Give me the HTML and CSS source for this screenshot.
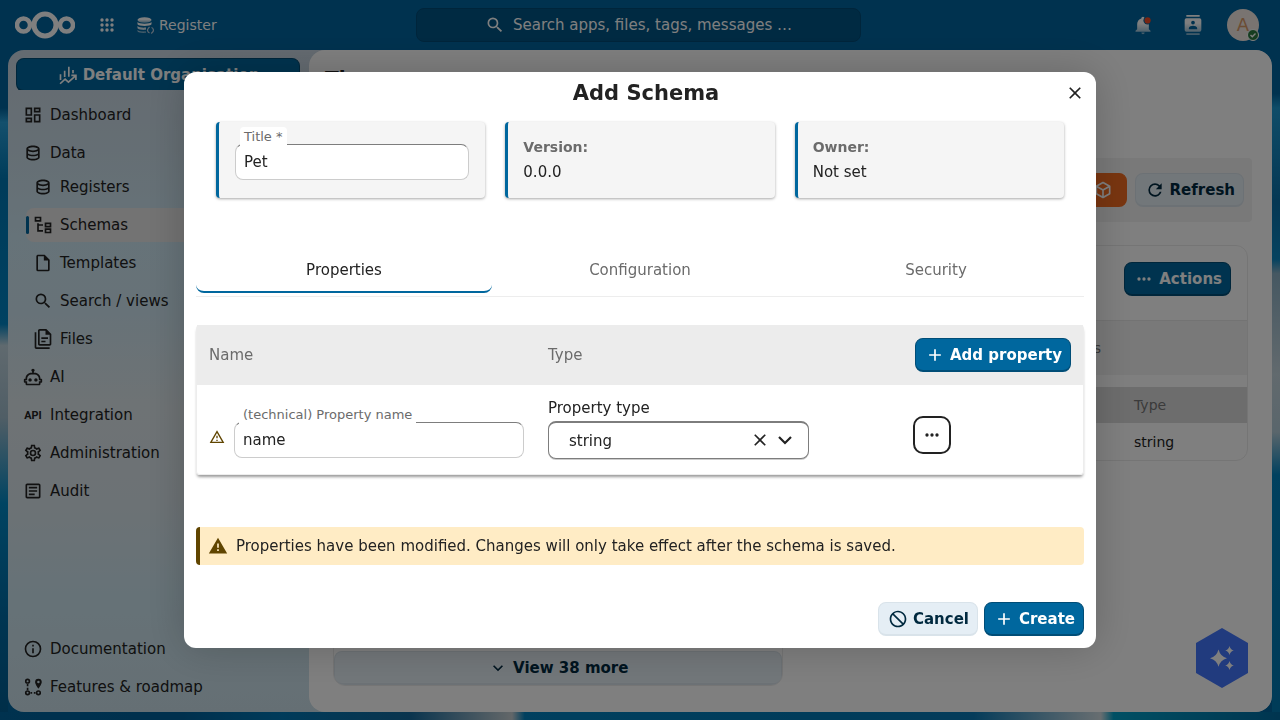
FILE: index.html
```html
<!DOCTYPE html>
<html lang="en">
  <head>
    <meta charset="UTF-8" />
    <title>Schemas - Register</title>
    <link rel="stylesheet" href="styles.css">
  </head>

  <body>
    <header class="topbar">
      <div class="topbar-left">
        <a href="#" class="logo" aria-label="Home">
          <svg width="60" height="28" viewBox="0 0 60 28" fill="none" stroke="#fff">
            <circle cx="30" cy="14" r="11" stroke-width="5" />
            <circle cx="8.500" cy="14" r="6.500" stroke-width="4.500" />
            <circle cx="51.500" cy="14" r="6.500" stroke-width="4.500" />
          </svg>
        </a>
        <a href="#" class="apps" aria-label="All apps">
          <svg width="14" height="14" viewBox="0 0 14 14" fill="#fff">
            <circle cx="2" cy="2" r="1.700" /><circle cx="7" cy="2" r="1.700" /><circle cx="12" cy="2" r="1.700" />
            <circle cx="2" cy="7" r="1.700" /><circle cx="7" cy="7" r="1.700" /><circle cx="12" cy="7" r="1.700" />
            <circle cx="2" cy="12" r="1.700" /><circle cx="7" cy="12" r="1.700" /><circle cx="12" cy="12" r="1.700" />
          </svg>
        </a>
        <a href="#" class="current-app">
          <svg width="17" height="17" viewBox="0 0 17 17">
            <defs>
              <linearGradient id="fade" x1="0" y1="0" x2="0" y2="1">
                <stop offset="0" stop-color="#fff" />
                <stop offset="0.4" stop-color="#fff" />
                <stop offset="1" stop-color="#fff" stop-opacity="0.500" />
              </linearGradient>
            </defs>
            <g fill="url(#fade)">
              <ellipse cx="7.500" cy="3" rx="7" ry="2.800" />
              <path d="M.5 5c1 2.300 13 2.300 14 0v2.300c-1 2.300-13 2.300-14 0zM.5 9c1 1.500 5 2 8.500 1.600v2.200c-3.500.3-7.500 0-8.500-1.600zM.5 13c1 1.300 5 1.800 8.500 1.500v1.300c-4 .5-8-.2-8.500-1.500z" />
            </g>
            <path d="M12.500 9.800l-1.200 1.500a2.800 2.800 0 0 0 1.200 4.600M14.300 16.500l1.200-1.300a2.800 2.800 0 0 0-1-4.700" fill="none" stroke="#bcd" stroke-width="1.200" />
          </svg>
          Register
        </a>
      </div>

      <button class="search">
        <svg class="icon" viewBox="0 0 24 24"><path d="M9.500,3A6.500,6.500 0 0,1 16,9.500C16,11.110 15.410,12.590 14.440,13.730L14.710,14H15.500L20.500,19L19,20.500L14,15.500V14.710L13.730,14.440C12.590,15.410 11.110,16 9.500,16A6.500,6.500 0 0,1 3,9.500A6.500,6.500 0 0,1 9.500,3M9.500,5C7,5 5,7 5,9.500C5,12 7,14 9.500,14C12,14 14,12 14,9.500C14,7 12,5 9.500,5Z" /></svg>
        Search apps, files, tags, messages …
      </button>

      <div class="topbar-right">
        <button class="top-icon" aria-label="Notifications">
          <svg class="icon" viewBox="0 0 24 24">
            <path fill="url(#fade)" d="M21,19V20H3V19L5,17V11C5,7.900 7.030,5.170 10,4.290C10,4.190 10,4.100 10,4A2,2 0 0,1 12,2A2,2 0 0,1 14,4C14,4.100 14,4.190 14,4.290C16.970,5.170 19,7.900 19,11V17L21,19M14,21A2,2 0 0,1 12,23A2,2 0 0,1 10,21" />
            <circle cx="17.500" cy="6.500" r="5" fill="#00649e" />
            <circle cx="17.500" cy="6.500" r="3.700" fill="#f04a24" />
          </svg>
        </button>
        <button class="top-icon" aria-label="Contacts">
          <svg class="icon" viewBox="0 0 24 24"><path fill="url(#fade)" d="M20,0H4V2H20V0M4,24H20V22H4V24M20,4H4A2,2 0 0,0 2,6V18A2,2 0 0,0 4,20H20A2,2 0 0,0 22,18V6A2,2 0 0,0 20,4M12,6.750A2.250,2.250 0 0,1 14.250,9A2.250,2.250 0 0,1 12,11.250A2.250,2.250 0 0,1 9.750,9A2.250,2.250 0 0,1 12,6.750M17,17H7V15.500C7,13.830 10.330,13 12,13C13.670,13 17,13.830 17,15.500V17Z" /></svg>
        </button>
        <button class="avatar" aria-label="Settings menu">
          A
          <svg class="status" width="12" height="12" viewBox="0 0 12 12">
            <circle cx="6" cy="6" r="5.500" fill="#2d7b41" stroke="#fff" stroke-width="1" />
            <path d="M3.500 6l1.800 1.800 3.200-3.200" fill="none" stroke="#fff" stroke-width="1.400" />
          </svg>
        </button>
      </div>
    </header>

    <div class="content">
      <nav class="sidebar">
        <div class="org">
          <button class="btn primary wide">
            <svg class="icon" viewBox="0 0 24 24" fill="none" stroke="currentColor" stroke-width="2"><path d="M3 18v-7M8 14.500V7M13 14V2M18 10V6" /><path d="M2.500 22.500l6-5.500 4 3.500 8.500-7.500M16 12.500h5.500V18" /></svg>
            Default Organisation
          </button>
        </div>
        <ul class="menu">
          <li><a href="#"><svg class="icon" viewBox="0 0 24 24"><path d="M19,5V7H15V5H19M9,5V11H5V5H9M19,13V19H15V13H19M9,17V19H5V17H9M21,3H13V9H21V3M11,3H3V13H11V3M21,11H13V21H21V11M11,15H3V21H11V15Z" /></svg>Dashboard</a></li>
          <li>
            <a href="#"><svg class="icon" viewBox="0 0 24 24"><path d="M12 3C7.580 3 4 4.790 4 7V17C4 19.210 7.590 21 12 21S20 19.210 20 17V7C20 4.790 16.420 3 12 3M18 17C18 17.500 15.870 19 12 19S6 17.500 6 17V14.770C7.610 15.550 9.720 16 12 16S16.390 15.550 18 14.770V17M18 12.450C16.700 13.400 14.420 14 12 14C9.580 14 7.300 13.400 6 12.450V9.640C7.470 10.470 9.610 11 12 11C14.390 11 16.530 10.470 18 9.640V12.450M12 9C8.130 9 6 7.500 6 7S8.130 5 12 5C15.870 5 18 6.500 18 7S15.870 9 12 9Z" /></svg>Data</a>
            <ul class="submenu">
              <li><a href="#"><svg class="icon" viewBox="0 0 24 24"><path d="M12 3C7.580 3 4 4.790 4 7V17C4 19.210 7.590 21 12 21S20 19.210 20 17V7C20 4.790 16.420 3 12 3M18 17C18 17.500 15.870 19 12 19S6 17.500 6 17V14.770C7.610 15.550 9.720 16 12 16S16.390 15.550 18 14.770V17M18 12.450C16.700 13.400 14.420 14 12 14C9.580 14 7.300 13.400 6 12.450V9.640C7.470 10.470 9.610 11 12 11C14.390 11 16.530 10.470 18 9.640V12.450M12 9C8.130 9 6 7.500 6 7S8.130 5 12 5C15.870 5 18 6.500 18 7S15.870 9 12 9Z" /></svg>Registers</a></li>
              <li><a href="#" class="active"><svg class="icon" viewBox="0 0 24 24"><path d="M12 13H7V18H12V20H5V10H7V11H12V13M8 4V6H4V4H8M10 2H2V8H10V2M20 11V13H16V11H20M22 9H14V15H22V9M20 18V20H16V18H20M22 16H14V22H22V16Z" /></svg>Schemas</a></li>
              <li><a href="#"><svg class="icon" viewBox="0 0 24 24"><path d="M14,2H6A2,2 0 0,0 4,4V20A2,2 0 0,0 6,22H18A2,2 0 0,0 20,20V8L14,2M18,20H6V4H13V9H18V20Z" /></svg>Templates</a></li>
              <li><a href="#"><svg class="icon" viewBox="0 0 24 24"><path d="M9.500,3A6.500,6.500 0 0,1 16,9.500C16,11.110 15.410,12.590 14.440,13.730L14.710,14H15.500L20.500,19L19,20.500L14,15.500V14.710L13.730,14.440C12.590,15.410 11.110,16 9.500,16A6.500,6.500 0 0,1 3,9.500A6.500,6.500 0 0,1 9.500,3M9.500,5C7,5 5,7 5,9.500C5,12 7,14 9.500,14C12,14 14,12 14,9.500C14,7 12,5 9.500,5Z" /></svg>Search / views</a></li>
              <li><a href="#"><svg class="icon" viewBox="0 0 24 24"><path d="M16 0H8C6.900 0 6 .9 6 2V18C6 19.100 6.900 20 8 20H20C21.100 20 22 19.100 22 18V6L16 0M20 18H8V2H15V7H20V18M4 4V22H20V24H4C2.900 24 2 23.100 2 22V4H4M10 10V12H18V10H10M10 14V16H15V14H10Z" /></svg>Files</a></li>
            </ul>
          </li>
          <li><a href="#"><svg class="icon" viewBox="0 0 24 24"><path d="M17.500 15.500C17.500 16.610 16.610 17.500 15.500 17.500S13.500 16.610 13.500 15.500 14.400 13.500 15.500 13.500 17.500 14.400 17.500 15.500M8.500 13.500C7.400 13.500 6.500 14.400 6.500 15.500S7.400 17.500 8.500 17.500 10.500 16.610 10.500 15.500 9.610 13.500 8.500 13.500M23 15V18C23 18.550 22.550 19 22 19H21V20C21 21.110 20.110 22 19 22H5C3.900 22 3 21.110 3 20V19H2C1.450 19 1 18.550 1 18V15C1 14.450 1.450 14 2 14H3C3 10.130 6.130 7 10 7H11V5.730C10.400 5.390 10 4.740 10 4C10 2.900 10.900 2 12 2S14 2.900 14 4C14 4.740 13.600 5.390 13 5.730V7H14C17.870 7 21 10.130 21 14H22C22.550 14 23 14.450 23 15M21 16H19V14C19 11.240 16.760 9 14 9H10C7.240 9 5 11.240 5 14V16H3V17H5V20H19V17H21V16Z" /></svg>AI</a></li>
          <li><a href="#"><svg class="icon" viewBox="0 0 24 24"><text x="12" y="17" text-anchor="middle" class="api">API</text></svg>Integration</a></li>
          <li><a href="#"><svg class="icon" viewBox="0 0 24 24"><path d="M12,8A4,4 0 0,1 16,12A4,4 0 0,1 12,16A4,4 0 0,1 8,12A4,4 0 0,1 12,8M12,10A2,2 0 0,0 10,12A2,2 0 0,0 12,14A2,2 0 0,0 14,12A2,2 0 0,0 12,10M10,22C9.750,22 9.540,21.820 9.500,21.580L9.130,18.930C8.500,18.680 7.960,18.340 7.440,17.940L4.950,18.950C4.730,19.030 4.460,18.950 4.340,18.730L2.340,15.270C2.210,15.050 2.270,14.780 2.460,14.630L4.570,12.970L4.500,12L4.570,11L2.460,9.370C2.270,9.220 2.210,8.950 2.340,8.730L4.340,5.270C4.460,5.050 4.730,4.960 4.950,5.050L7.440,6.050C7.960,5.660 8.500,5.320 9.130,5.070L9.500,2.420C9.540,2.180 9.750,2 10,2H14C14.250,2 14.460,2.180 14.500,2.420L14.870,5.070C15.500,5.320 16.040,5.660 16.560,6.050L19.050,5.050C19.270,4.960 19.540,5.050 19.660,5.270L21.660,8.730C21.790,8.950 21.730,9.220 21.540,9.370L19.430,11L19.500,12L19.430,13L21.540,14.630C21.730,14.780 21.790,15.050 21.660,15.270L19.660,18.730C19.540,18.950 19.270,19.040 19.050,18.950L16.560,17.950C16.040,18.340 15.500,18.680 14.870,18.930L14.500,21.580C14.460,21.820 14.250,22 14,22H10M11.250,4L10.880,6.610C9.680,6.860 8.620,7.500 7.850,8.390L5.440,7.350L4.690,8.650L6.800,10.200C6.400,11.370 6.400,12.640 6.800,13.800L4.680,15.360L5.430,16.660L7.860,15.620C8.630,16.500 9.680,17.140 10.870,17.380L11.240,20H12.760L13.130,17.390C14.320,17.140 15.370,16.500 16.140,15.620L18.570,16.660L19.320,15.360L17.200,13.810C17.600,12.640 17.600,11.370 17.200,10.200L19.310,8.650L18.560,7.350L16.150,8.390C15.380,7.500 14.320,6.860 13.120,6.620L12.750,4H11.250Z" /></svg>Administration</a></li>
          <li><a href="#"><svg class="icon" viewBox="0 0 24 24"><path d="M5,3C3.890,3 3,3.890 3,5V19C3,20.110 3.890,21 5,21H19C20.110,21 21,20.110 21,19V5C21,3.890 20.110,3 19,3H5M5,5H19V19H5V5M7,7V9H17V7H7M7,11V13H17V11H7M7,15V17H14V15H7Z" /></svg>Audit</a></li>
        </ul>
        <ul class="menu bottom">
          <li><a href="#"><svg class="icon" viewBox="0 0 24 24"><path d="M11,9H13V7H11M12,20C7.590,20 4,16.410 4,12C4,7.590 7.590,4 12,4C16.410,4 20,7.590 20,12C20,16.410 16.410,20 12,20M12,2A10,10 0 0,0 2,12A10,10 0 0,0 12,22A10,10 0 0,0 22,12A10,10 0 0,0 12,2M11,17H13V11H11V17Z" /></svg>Documentation</a></li>
          <li><a href="#"><svg class="icon" viewBox="0 0 24 24"><g fill="none" stroke="currentColor" stroke-width="2"><circle cx="5.500" cy="5" r="2.200" /><circle cx="5.500" cy="19" r="2.200" /><circle cx="18.500" cy="19" r="2.200" /><path d="M5.500 8.500v2.500M5.500 13v2.500M9 19h2M13 19h2" /></g><path d="M18.500 2a4 4 0 0 0-4 4c0 3 4 8 4 8s4-5 4-8a4 4 0 0 0-4-4m0 5.500a1.500 1.500 0 1 1 0-3 1.500 1.500 0 0 1 0 3" /></svg>Features &amp; roadmap</a></li>
        </ul>
      </nav>

      <main class="page">
        <h2>Themes</h2>
        <div class="toolbar">
          <button class="btn orange" aria-label="Objects"><svg class="icon" viewBox="0 0 24 24"><path d="M21,16.500C21,16.880 20.790,17.210 20.470,17.380L12.570,21.820C12.410,21.940 12.210,22 12,22C11.790,22 11.590,21.940 11.430,21.820L3.530,17.380C3.210,17.210 3,16.880 3,16.500V7.500C3,7.120 3.210,6.790 3.530,6.620L11.430,2.180C11.590,2.060 11.790,2 12,2C12.210,2 12.410,2.060 12.570,2.180L20.470,6.620C20.790,6.790 21,7.120 21,7.500V16.500M12,4.150L6.040,7.500L12,10.850L17.960,7.500L12,4.150M5,15.910L11,19.290V12.580L5,9.210V15.910M19,15.910V9.210L13,12.580V19.290L19,15.910Z" /></svg></button>
          <button class="btn"><svg class="icon" viewBox="0 0 24 24"><path d="M17.650,6.350C16.200,4.900 14.210,4 12,4A8,8 0 0,0 4,12A8,8 0 0,0 12,20C15.730,20 18.840,17.450 19.730,14H17.650C16.830,16.330 14.610,18 12,18A6,6 0 0,1 6,12A6,6 0 0,1 12,6C13.660,6 15.140,6.690 16.220,7.780L13,11H20V4L17.650,6.350Z" /></svg>Refresh</button>
        </div>
        <div class="cards">
          <section class="card tall">
            <button class="btn wide"><svg class="icon" viewBox="0 0 24 24"><path d="M7.410,8.580L12,13.170L16.590,8.580L18,10L12,16L6,10L7.410,8.580Z" /></svg>View 38 more</button>
          </section>
          <section class="card">
            <div class="card-head">
              <button class="btn primary"><svg class="icon" viewBox="0 0 24 24"><path d="M16,12A2,2 0 0,1 18,10A2,2 0 0,1 20,12A2,2 0 0,1 18,14A2,2 0 0,1 16,12M10,12A2,2 0 0,1 12,10A2,2 0 0,1 14,12A2,2 0 0,1 12,14A2,2 0 0,1 10,12M4,12A2,2 0 0,1 6,10A2,2 0 0,1 8,12A2,2 0 0,1 6,14A2,2 0 0,1 4,12Z" /></svg>Actions</button>
            </div>
            <p class="card-info">items</p>
            <table class="mini">
              <thead><tr><th>Name</th><th>Type</th></tr></thead>
              <tbody><tr><td>name</td><td>string</td></tr></tbody>
            </table>
          </section>
        </div>
      </main>
    </div>

    <button class="ai-button" aria-label="AI assistant">
      <svg width="52" height="60" viewBox="0 0 52 60">
        <path d="M26 0l26 15v30L26 60 0 45V15z" fill="#4376fc" />
        <path d="M22.500 21.500q1.800 7 8.500 8.700-6.700 1.700-8.500 8.600-1.800-6.900-8.500-8.600 6.700-1.700 8.500-8.700zM33.500 18q1 3.600 4.300 4.500-3.300.9-4.300 4.500-1-3.600-4.300-4.500 3.300-.9 4.300-4.500zM33.500 33q1 3.600 4.300 4.500-3.300.9-4.300 4.500-1-3.600-4.300-4.500 3.300-.9 4.300-4.500z" fill="#fff" />
      </svg>
    </button>

    <div class="backdrop">
      <div class="modal" role="dialog" aria-labelledby="modal-title">
        <button class="close" aria-label="Close"><svg class="icon" viewBox="0 0 24 24"><path d="M19,6.410L17.590,5L12,10.590L6.410,5L5,6.410L10.590,12L5,17.590L6.410,19L12,13.410L17.590,19L19,17.590L13.410,12L19,6.410Z" /></svg></button>
        <h2 id="modal-title">Add Schema</h2>

        <div class="details">
          <div class="detail">
            <div class="field">
              <label for="title">Title *</label>
              <input type="text" id="title" value="Pet">
            </div>
          </div>
          <div class="detail">
            <strong>Version:</strong>
            <span>0.0.0</span>
          </div>
          <div class="detail">
            <strong>Owner:</strong>
            <span>Not set</span>
          </div>
        </div>

        <div class="tabs" role="tablist">
          <button role="tab" aria-selected="true" class="selected">Properties</button>
          <button role="tab" aria-selected="false">Configuration</button>
          <button role="tab" aria-selected="false">Security</button>
        </div>

        <table class="properties">
          <thead>
            <tr>
              <th>Name</th>
              <th class="col-type">Type</th>
              <th class="col-actions"><button class="btn primary"><svg class="icon" viewBox="0 0 24 24"><path d="M19,13H13V19H11V13H5V11H11V5H13V11H19V13Z" /></svg>Add property</button></th>
            </tr>
          </thead>
          <tbody>
            <tr>
              <td>
                <div class="name-cell">
                  <svg class="warn" viewBox="0 0 24 24"><path d="M12,2L1,21H23M12,6L19.530,19H4.470M11,10V14H13V10M11,16V18H13V16" /></svg>
                  <div class="field">
                    <label for="prop-name">(technical) Property name</label>
                    <input type="text" id="prop-name" value="name">
                  </div>
                </div>
              </td>
              <td>
                <label for="prop-type">Property type</label>
                <div class="select">
                  <select id="prop-type"><option>string</option></select>
                  <button class="clear" aria-label="Clear selected"><svg class="icon" viewBox="0 0 24 24"><path d="M19,6.410L17.590,5L12,10.590L6.410,5L5,6.410L10.590,12L5,17.590L6.410,19L12,13.410L17.590,19L19,17.590L13.410,12L19,6.410Z" /></svg></button>
                  <svg class="arrow" width="14" height="9" viewBox="0 0 14 9" fill="none" stroke="#222" stroke-width="2.200"><path d="M1 1l6 6 6-6" /></svg>
                </div>
              </td>
              <td>
                <button class="more" aria-label="Actions"><svg class="icon" viewBox="0 0 24 24"><path d="M16,12A2,2 0 0,1 18,10A2,2 0 0,1 20,12A2,2 0 0,1 18,14A2,2 0 0,1 16,12M10,12A2,2 0 0,1 12,10A2,2 0 0,1 14,12A2,2 0 0,1 12,14A2,2 0 0,1 10,12M4,12A2,2 0 0,1 6,10A2,2 0 0,1 8,12A2,2 0 0,1 6,14A2,2 0 0,1 4,12Z" /></svg></button>
              </td>
            </tr>
          </tbody>
        </table>

        <div class="note">
          <svg class="icon" viewBox="0 0 24 24"><path d="M13 14H11V9H13M13 18H11V16H13M1 21H23L12 2L1 21Z" /></svg>
          <p>Properties have been modified. Changes will only take effect after the schema is saved.</p>
        </div>

        <div class="modal-actions">
          <button class="btn"><svg class="icon" viewBox="0 0 24 24"><path d="M12 2C17.500 2 22 6.500 22 12S17.500 22 12 22 2 17.500 2 12 6.500 2 12 2M12 4C10.100 4 8.400 4.600 7.100 5.700L18.300 16.900C19.300 15.500 20 13.800 20 12C20 7.600 16.400 4 12 4M16.900 18.300L5.700 7.100C4.600 8.400 4 10.100 4 12C4 16.400 7.600 20 12 20C13.900 20 15.600 19.400 16.900 18.300Z" /></svg>Cancel</button>
          <button class="btn primary"><svg class="icon" viewBox="0 0 24 24"><path d="M19,13H13V19H11V13H5V11H11V5H13V11H19V13Z" /></svg>Create</button>
        </div>
      </div>
    </div>
  </body>
</html>
```

FILE: styles.css
```css
* {
  box-sizing: border-box;
}

body {
  margin: 0;
  height: 100vh;
  display: flex;
  flex-direction: column;
  overflow: hidden;
  font-family: "DejaVu Sans", sans-serif;
  font-size: 15px;
  line-height: 20px;
  color: #222;
  background:
    linear-gradient(90deg, #00649e 0, #00609a 14%, #0076b4 22%, #14699c 32%, #c6ced2 40%, #0080be 41%, #0078b4 65%, #0a78b4 76%, #d0dce2 86%, #00a0c8 87%, #006aa0 100%) bottom / 100% 8px no-repeat,
    linear-gradient(180deg, #00649e 0, #00649e 13%, #1e9ad2 15%, #0a70a8 28%, #0a86c0 36%, #8cb0c4 38%, #c4d4dc 52%, #b4ccd8 60%, #0082be 66%, #0078b0 100%) right / 8px 100% no-repeat,
    linear-gradient(180deg, #00649e 0, #00649e 15%, #28a0da 17%, #0078b4 25%, #0084c4 45%, #c0d4de 48%, #a0bccc 58%, #0088c4 70%, #006aa4 86%, #005c90 100%) left / 8px 100% no-repeat,
    #00649e;
}

button,
input,
select {
  font: inherit;
  color: inherit;
}

button {
  cursor: pointer;
}

a {
  color: inherit;
  text-decoration: none;
}

h2,
p,
ul {
  margin: 0;
  padding: 0;
}

ul {
  list-style: none;
}

.icon {
  width: 20px;
  height: 20px;
  flex: none;
  fill: currentColor;
}

.icon[fill="none"] {
  fill: none;
}

/* header */

.topbar {
  display: grid;
  grid-template-columns: 1fr 445px 1fr;
  align-items: center;
  height: 50px;
  flex: none;
  padding: 0 15px 0 12px;
  color: #fff;
}

.topbar-left,
.topbar-right,
.logo,
.apps,
.current-app {
  display: flex;
  align-items: center;
}

.logo {
  margin-left: 3px;
}

.apps {
  margin: 0 23px 0 25px;
}

.current-app {
  gap: 5px;
  font-size: 14px;
}

.search {
  display: flex;
  align-items: center;
  justify-content: center;
  gap: 8px;
  height: 34px;
  border: 1px solid #004a76;
  border-radius: 8px;
  background: #005484;
  color: #fff;
}

.topbar-right {
  justify-content: flex-end;
}

.top-icon {
  display: flex;
  align-items: center;
  justify-content: center;
  width: 50px;
  height: 50px;
  padding: 0;
  border: none;
  background: none;
}

.avatar {
  position: relative;
  width: 32px;
  height: 32px;
  margin: 0 6px 0 9px;
  padding: 0;
  border: none;
  border-radius: 50%;
  background: #f2e8e2;
  color: #d89a68;
  font-size: 18px;
}

.status {
  position: absolute;
  right: 0;
  bottom: 0;
}

/* content */

.content {
  display: flex;
  flex: 1;
  min-height: 0;
  margin: 0 8px 8px;
  border-radius: 16px;
  overflow: hidden;
  background: linear-gradient(180deg, #c9d6e2 0, #cbdde8 15%, #cde6f2 28%, #cfe5f0 40%, #dde6ea 54%, #d9e4ea 68%, #cde5ef 82%, #cbdfe9 100%);
}

.sidebar {
  display: flex;
  flex-direction: column;
  flex: none;
  width: 301px;
  padding: 8px 9px 8px 8px;
}

.org {
  height: 32px;
  margin-bottom: 8px;
  flex: none;
  overflow: hidden;
}

.menu a {
  display: flex;
  align-items: center;
  gap: 7px;
  height: 34px;
  margin-bottom: 4px;
  padding-left: 7px;
  border-radius: 8px;
}

.submenu {
  margin-top: -4px;
  padding-left: 10px;
}

.menu .active {
  position: relative;
  background: #e6e6e6;
}

.active::before {
  content: "";
  position: absolute;
  left: 0;
  top: 8px;
  width: 3px;
  height: 18px;
  border-radius: 2px;
  background: #00679e;
}

.bottom {
  margin-top: auto;
}

.bottom li:last-child a {
  margin-bottom: 0;
}

.api {
  font-family: Roboto, sans-serif;
  font-size: 13px;
  font-weight: bold;
}

.page {
  flex: 1;
  overflow: hidden;
  border-radius: 16px;
  background: #fff;
  padding: 16px 16px 0;
}

.page h2 {
  font-size: 20px;
  line-height: 24px;
}

.toolbar {
  display: flex;
  justify-content: flex-end;
  gap: 8px;
  margin: 68px 4px 23px 0;
  padding: 15px 8px;
  border-radius: 4px;
  background: #f3f3f3;
}

.cards {
  display: grid;
  grid-template-columns: 1fr 1fr;
  align-items: start;
  gap: 16px;
  padding: 0 8px;
}

.card {
  border: 1px solid #ebebeb;
  border-radius: 12px;
  overflow: hidden;
}

.tall {
  display: flex;
  align-items: flex-end;
  height: 441px;
}

.card-head {
  display: flex;
  justify-content: flex-end;
  padding: 16px 16px 24px;
}

.card-info {
  padding: 17px 146px 17px 16px;
  margin-bottom: 12px;
  border-top: 1px solid #e6e6e6;
  background: #f3f3f3;
  color: #767676;
  font-size: 14px;
  text-align: right;
}

.mini {
  width: 100%;
  border-spacing: 0;
  font-size: 14px;
  text-align: left;
}

.mini th {
  height: 36px;
  padding: 0 12px;
  background: #dbdbdb;
  color: #767676;
  font-weight: normal;
}

.mini td {
  height: 37px;
  padding: 0 12px;
}

.mini th:last-child {
  width: 125px;
}

.btn {
  display: inline-flex;
  align-items: center;
  justify-content: center;
  gap: 5px;
  height: 34px;
  padding: 0 8px 0 9px;
  border: 1px solid #d9e3ea;
  border-bottom-width: 2px;
  border-radius: 8px;
  background: #e5eef5;
  color: #00293f;
  font-weight: bold;
}

.primary {
  border-color: #004d77;
  background: #00679e;
  color: #fff;
}

.orange {
  width: 48px;
  border-color: #f36c21;
  background: #f36c21;
  color: #fff;
}

.wide {
  width: 100%;
}

.ai-button {
  position: fixed;
  right: 32px;
  bottom: 32px;
  padding: 0;
  border: none;
  background: none;
  line-height: 0;
}

/* modal */

.backdrop {
  position: fixed;
  inset: 0;
  display: flex;
  align-items: center;
  justify-content: center;
  background: rgba(0, 0, 0, 0.5);
}

.modal {
  position: relative;
  width: 912px;
  max-width: calc(100% - 32px);
  padding: 0 12px 12px;
  border-radius: 12px;
  background: #fff;
  box-shadow: 0 0 40px rgba(0, 0, 0, 0.2);
}

.modal h2 {
  padding-left: 12px;
  font-size: 21px;
  line-height: 42px;
  text-align: center;
}

.close {
  position: absolute;
  top: 4px;
  right: 4px;
  display: flex;
  align-items: center;
  justify-content: center;
  width: 34px;
  height: 34px;
  padding: 0;
  border: none;
  background: none;
}

.details {
  display: grid;
  grid-template-columns: repeat(3, 1fr);
  gap: 20px;
  margin: 8px 20px 49px;
}

.detail {
  display: flex;
  flex-direction: column;
  gap: 5px;
  height: 76px;
  padding: 15px;
  border-left: 3px solid #00679e;
  border-radius: 4px;
  background: #f5f5f5;
  box-shadow: 0 1px 3px rgba(0, 0, 0, 0.35);
}

.detail strong {
  color: #6b6b6b;
  font-size: 14px;
}

.field {
  position: relative;
}

.detail .field {
  margin: 7px 1px 0;
}

.field label {
  position: absolute;
  left: 5px;
  top: -17px;
  padding: 0 4px;
  border-radius: 4px 4px 0 0;
  background: #fff;
  color: #6b6b6b;
  font-size: 13px;
}

.field input {
  display: block;
  width: 100%;
  height: 36px;
  padding: 0 8px;
  border: 1px solid #ccc;
  border-top-color: #7d7d7d;
  border-radius: 8px;
  background: #fff;
}

.tabs {
  display: flex;
  padding-bottom: 3px;
  border-bottom: 1px solid #ededed;
}

.tabs button {
  flex: 1;
  height: 46px;
  padding: 1px 0 0;
  border: none;
  border-bottom: 2px solid transparent;
  border-radius: 8px;
  background: none;
  color: #6b6b6b;
}

.tabs .selected {
  border-bottom-color: #00679e;
  color: #222;
}

.properties {
  width: 100%;
  margin: 28px 0 52px;
  border: 1px solid #ededed;
  border-top: none;
  border-radius: 4px;
  border-spacing: 0;
  box-shadow: 0 3px 3px -1px rgba(0, 0, 0, 0.4);
  text-align: left;
}

.properties th {
  height: 60px;
  padding: 0 12px;
  background: #ececec;
  color: #6b6b6b;
  font-weight: normal;
}

.properties td {
  height: 89px;
  padding: 0 12px;
}

.properties tbody td {
  padding-bottom: 2px;
}

.col-type {
  width: 367px;
}

.col-actions {
  width: 180px;
}

.name-cell {
  display: flex;
  align-items: center;
  gap: 9px;
  padding-top: 22px;
}

.name-cell .field {
  flex: 1;
}

.warn {
  width: 16px;
  height: 16px;
  flex: none;
  margin-bottom: 6px;
  fill: #604500;
}

.select {
  position: relative;
  width: 261px;
  max-width: 100%;
  margin-top: 3px;
}

.select select {
  display: block;
  width: 100%;
  height: 38px;
  padding: 0 60px 0 20px;
  border: 1px solid #7d7d7d;
  border-top-width: 2px;
  border-radius: 8px;
  background: #fff;
  box-shadow: 0 1px 0 #ccc;
  appearance: none;
}

.clear {
  position: absolute;
  right: 39px;
  top: 9px;
  width: 20px;
  height: 20px;
  padding: 0;
  border: none;
  background: none;
}

.arrow {
  position: absolute;
  right: 17px;
  top: 15px;
  pointer-events: none;
}

.more {
  display: flex;
  align-items: center;
  justify-content: center;
  width: 38px;
  height: 38px;
  margin: 12px 0 0 -2px;
  padding: 0;
  border: 2px solid #222;
  border-radius: 10px;
  background: #fff;
}

.note {
  display: flex;
  align-items: center;
  gap: 8px;
  margin-bottom: 37px;
  padding: 9px 8px;
  border-left: 4px solid #604500;
  border-radius: 4px;
  background: #ffecc5;
}

.note .icon {
  fill: #604500;
}

.modal-actions {
  display: flex;
  justify-content: flex-end;
  gap: 6px;
}
```
